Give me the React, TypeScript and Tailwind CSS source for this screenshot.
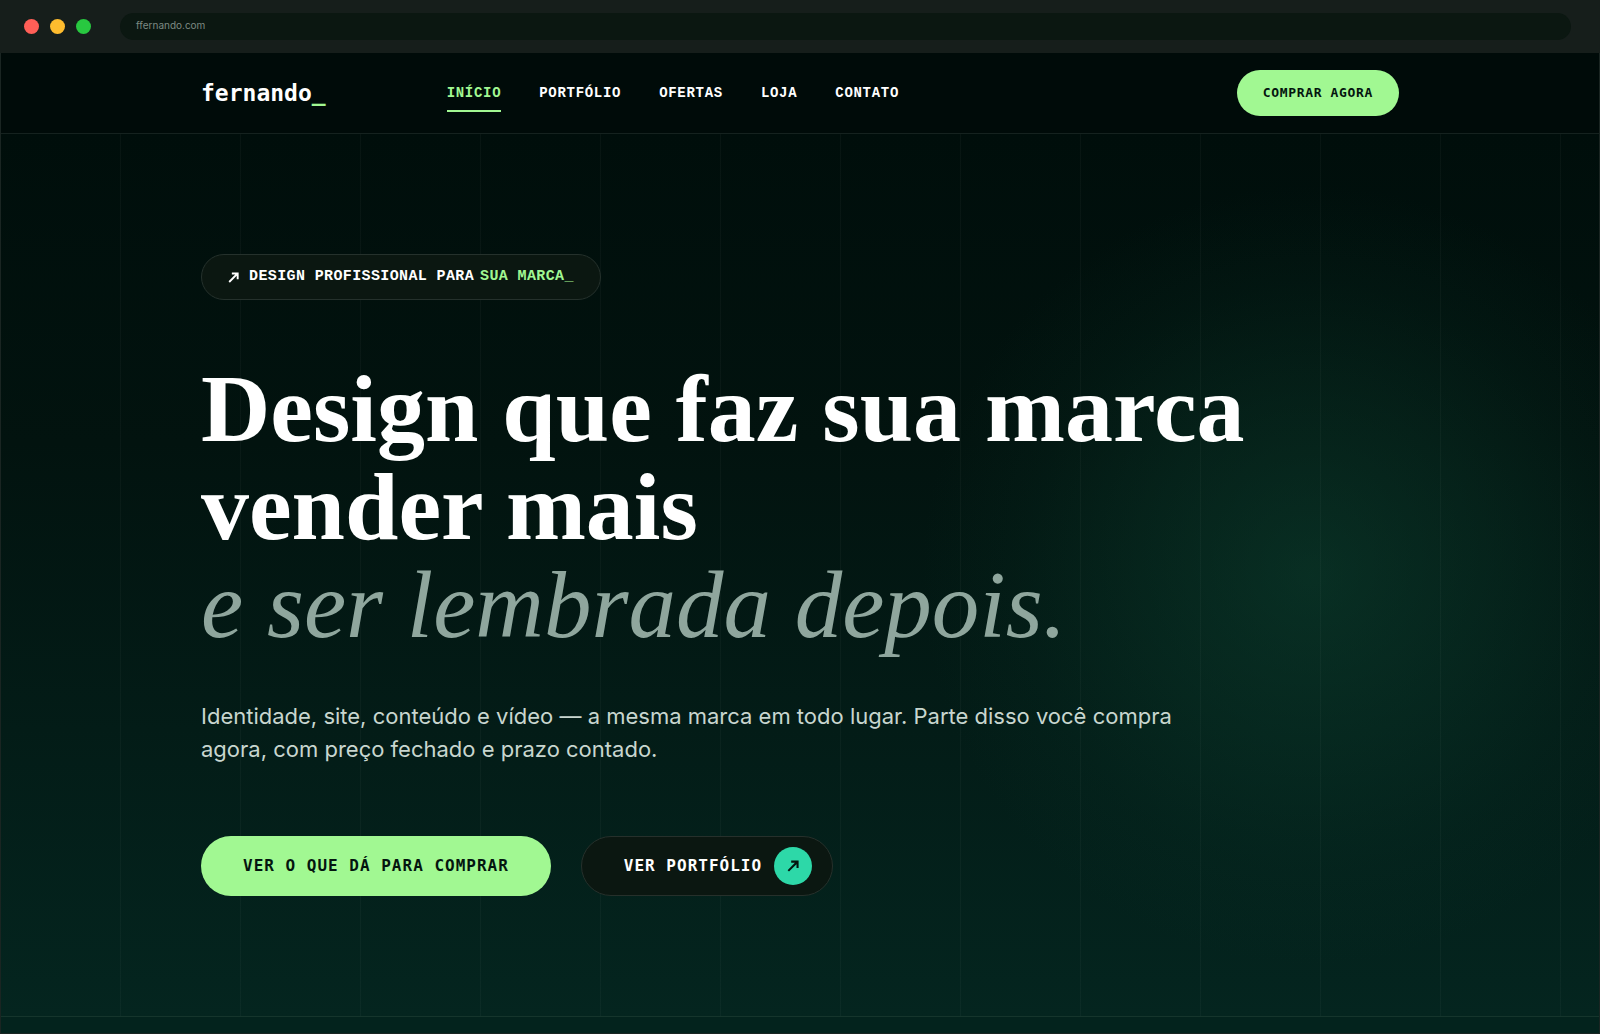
import { ReactNode } from "react";

const links = [
	{ label: "INÍCIO", href: "#inicio", active: true },
	{ label: "PORTFÓLIO", href: "#portfolio" },
	{ label: "OFERTAS", href: "#ofertas" },
	{ label: "LOJA", href: "#loja" },
	{ label: "CONTATO", href: "#contato" },
];

const Arrow = ({ className }: { className: string }) => (
	<svg viewBox="0 0 12 12" className={className} fill="currentColor" aria-hidden="true">
		<path d="M4.2 0.6H11.6V8H9.5V4.2L2 11.6 0.6 10.2 7.9 2.7H4.2Z" />
	</svg>
);

const Container = ({ className, children }: { className: string; children: ReactNode }) => (
	<div className={`w-full max-w-[1198px] mx-auto ${className}`}>{children}</div>
);

const BrowserBar = () => (
	<div className="flex items-center h-[53px] pl-6 pr-[29px] bg-[#161e1b]">
		<div className="flex gap-[11px] mr-[29px]">
			<span className="w-[15px] h-[15px] rounded-full bg-[#ff5f57]" />
			<span className="w-[15px] h-[15px] rounded-full bg-[#febc2e]" />
			<span className="w-[15px] h-[15px] rounded-full bg-[#28c840]" />
		</div>
		<div className="flex-1 h-[27px] px-4 rounded-full bg-[#0b1711] text-[10px] leading-6 text-[#7d8a83]">ffernando.com</div>
	</div>
);

const Header = () => (
	<header className="bg-[#000b09] border-b border-[#15221f]">
		<Container className="flex items-center h-20">
			<a href="#inicio" className="font-['DejaVu_Sans_Mono',monospace] font-bold text-[23px] leading-8 text-white">
				fernando<span className="text-[#a1f892]">_</span>
			</a>
			<nav className="flex gap-[38px] ml-[121px] font-['Liberation_Mono',monospace] font-bold text-sm tracking-wider">
				{links.map((link) => (
					<a
						key={link.label}
						href={link.href}
						className={link.active ? "pt-[9px] pb-[7px] border-b-2 border-[#a1f892] text-[#a1f892]" : "pt-[9px] pb-[7px] border-b-2 border-transparent text-white"}
					>
						{link.label}
					</a>
				))}
			</nav>
			<button className="h-[46px] px-[26px] ml-auto rounded-full bg-[#a1f892] font-['DejaVu_Sans_Mono',monospace] font-bold text-[13px] tracking-wider text-[#04150f]">
				COMPRAR AGORA
			</button>
		</Container>
	</header>
);

const Hero = () => (
	<section className="bg-[repeating-linear-gradient(to_right,transparent_0_119px,rgba(255,255,255,0.03)_119px_120px),radial-gradient(circle_390px_at_82%_50%,rgba(18,85,62,0.38),rgba(14,72,53,0.26)_45%,rgba(10,60,45,0.12)_75%,transparent),linear-gradient(to_bottom,#000e0b,#02130f_35%,#04251f)] border-b border-[#15352c]">
		<Container className="py-[120px]">
			<p className="flex items-center w-fit h-[46px] px-[26px] border border-[#25312c] rounded-full bg-[#0b1711] font-['Liberation_Mono',monospace] font-bold text-[15px] tracking-wide text-white">
				<Arrow className="w-[11px] h-[11px] mr-2.5" />
				DESIGN PROFISSIONAL PARA
				<span className="ml-1.5 text-[#a1f892]">SUA MARCA_</span>
			</p>
			<h1 className="mt-[60px] font-['Liberation_Serif',serif] font-bold text-[96px] leading-[98px] text-white">
				Design que faz sua marca
				<br />
				vender mais
				<br />
				<em className="font-normal text-[95px] text-[#8fa69d]">e ser lembrada depois.</em>
			</h1>
			<p className="max-w-[980px] mt-[46px] text-[22px] leading-[33px] text-[#c8d6cf]">
				Identidade, site, conteúdo e vídeo — a mesma marca em todo lugar. Parte disso você compra agora, com preço fechado e prazo contado.
			</p>
			<div className="flex gap-[30px] mt-[70px] font-['DejaVu_Sans_Mono',monospace] font-bold text-base tracking-[1px]">
				<button className="h-[60px] px-[42px] rounded-full bg-[#a1f892] text-[#04150f]">VER O QUE DÁ PARA COMPRAR</button>
				<button className="flex items-center gap-3 h-[60px] pl-[42px] pr-5 border border-[#26302b] rounded-full bg-[#0b1711] text-white">
					VER PORTFÓLIO
					<span className="flex items-center justify-center w-[38px] h-[38px] rounded-full bg-[#2dd8a8] text-[#04150f]">
						<Arrow className="w-3 h-3" />
					</span>
				</button>
			</div>
		</Container>
	</section>
);

const App = () => {
	return (
		<div className="font-['Inter',sans-serif] bg-[#03231d]">
			<BrowserBar />
			<div className="border-x border-b border-[#1a2522]">
				<Header />
				<Hero />
				<div className="h-4 bg-[#03231d]" />
			</div>
		</div>
	);
};

export default App;
